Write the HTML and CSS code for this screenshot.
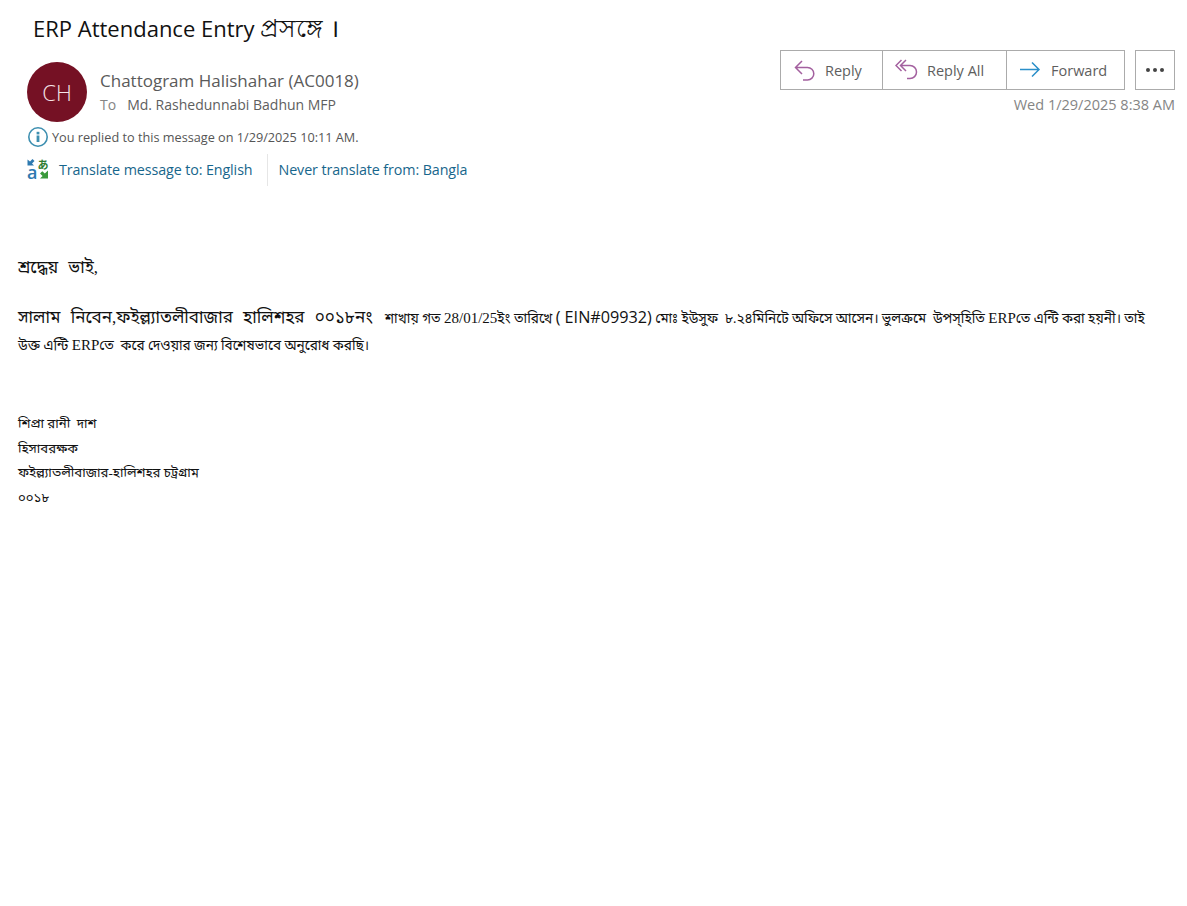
FILE: index.html
```html
<!DOCTYPE html>
<html lang="en">
<head>
<meta charset="utf-8">
<title>ERP Attendance Entry</title>
<link rel="stylesheet" href="styles.css">
</head>
<body>
<header class="mail-header">
  <h1 class="subject">ERP Attendance Entry <span class="subject-bn" lang="bn">প্রসঙ্গে ।</span></h1>
  <div class="meta">
    <div class="avatar">CH</div>
    <div class="people">
      <div class="sender">Chattogram Halishahar (AC0018)</div>
      <div class="recipient"><span class="to">To</span>Md. Rashedunnabi Badhun MFP</div>
    </div>
    <div class="actions">
      <div class="buttons">
        <div class="btn-group">
          <button class="btn btn-reply">
            <svg class="ic" width="24" height="24" viewBox="0 0 24 24"><path d="M9 3 2.500 9.500 9 16M3 9.500h11.500a6.300 6.300 0 0 1 6.300 6.200 6.300 6.300 0 0 1-6.300 6.300H10" class="purple"/></svg>
            Reply</button>
          <button class="btn btn-all">
            <svg class="ic" width="24" height="24" viewBox="0 0 24 24"><path d="M6.500 2 1 7.500 6.500 13M11 2 5.500 7.500 11 13M6 7.500h9a6.500 6.500 0 0 1 6.500 6.500 6.500 6.500 0 0 1-6.500 6.500h-3" class="purple"/></svg>
            Reply All</button>
          <button class="btn btn-fwd">
            <svg class="ic" width="24" height="24" viewBox="0 0 24 24"><path d="M1 11.500h18M13 4.500l7 7-7 7" class="blue"/></svg>
            Forward</button>
        </div>
        <button class="btn-more" aria-label="More"><i></i><i></i><i></i></button>
      </div>
      <div class="date">Wed 1/29/2025 8:38 AM</div>
    </div>
  </div>
  <div class="replied">
    <svg width="22" height="22" viewBox="0 0 22 22"><circle cx="11" cy="11" r="9.200" class="info-ring"/><rect x="9.600" y="9.500" width="2.800" height="6.500" class="info-fill"/><rect x="9.600" y="5.800" width="2.800" height="2.600" class="info-fill"/></svg>
    <span>You replied to this message on 1/29/2025 10:11 AM.</span>
  </div>
  <div class="translate">
    <svg class="tr-icon" width="22" height="22" viewBox="0 0 22 22">
      <path class="tr-blue" d="M0.500 1.500 3 3.500 5.500 1 7.500 3 5 5.500 7 7.500H0.500z"/>
      <text class="tr-a" x="0" y="20.500">a</text>
      <text class="tr-ja" x="10.500" y="10.500">あ</text>
      <path class="tr-green" d="M21 12.500v8h-8l2.600-2.600-2.600-2.400 2.300-2.300 2.500 2.400z"/>
    </svg>
    <a class="tr-link first">Translate message to: English</a>
    <a class="tr-link">Never translate from: Bangla</a>
  </div>
</header>
<main class="body" lang="bn">
  <p class="greet">শ্রদ্ধেয় ভাই,</p>
  <p class="para"><span class="lg">সালাম নিবেন,ফইল্ল্যাতলীবাজার হালিশহর ০০১৮নং</span>&nbsp;&nbsp; শাখায় গত <span class="lat">28/01/25</span>ইং তারিখে <span class="ein">( EIN#09932)</span> মোঃ ইউসুফ&nbsp; ৮.২৪মিনিটে অফিসে আসেন। ভুলক্রমে&nbsp; উপস্হিতি <span class="lat">ERP</span>তে এন্টি করা হয়নী। তাই<br>উক্ত এন্টি <span class="lat">ERP</span>তে&nbsp; করে দেওয়ার জন্য বিশেষভাবে অনুরোধ করছি।</p>
  <div class="sign">
    <div>শিপ্রা রানী&nbsp; দাশ</div>
    <div>হিসাবরক্ষক</div>
    <div>ফইল্ল্যাতলীবাজার-হালিশহর চট্রগ্রাম</div>
    <div>০০১৮</div>
  </div>
</main>
</body>
</html>
```
FILE: styles.css
```css
* { box-sizing: border-box; }
html, body { margin: 0; background: #fff; }
body { font-family: "Open Sans", "Noto Sans", "Liberation Sans", sans-serif; color: #000; height: 906px; overflow: hidden; }
.mail-header { padding: 11px 12px 0 27px; }
.subject { margin: 0 0 0 6px; font-size: 22px; font-weight: 400; line-height: 34px; color: #111; }
.subject-bn { font-size: 25px; line-height: 30px; }
.meta { display: flex; margin-top: 17px; height: 60px; }
.avatar { width: 60px; height: 60px; border-radius: 50%; background: #751124; color: #f5e5e8; font-size: 22px; font-weight: 300; display: flex; align-items: center; justify-content: center; flex: none; }
.people { margin-left: 13px; padding-top: 7px; flex: 1; }
.sender { font-size: 17px; line-height: 24px; color: #5a5a5a; }
.recipient { font-size: 14px; line-height: 22px; color: #5e5e5e; margin-top: 1px; }
.to { color: #858585; margin-right: 11px; }
.actions { margin-top: -12px; display: flex; flex-direction: column; align-items: flex-end; }
.buttons { display: flex; gap: 10px; }
.btn-group { display: flex; border: 1px solid #ababab; height: 40px; }
.btn { font: inherit; font-size: 14.500px; color: #5e5e5e; background: #fff; border: 0; padding: 0 0 0 12px; display: flex; align-items: center; gap: 8px; height: 38px; }
.btn-reply { width: 102px; border-right: 1px solid #ababab; }
.btn-all { width: 124px; border-right: 1px solid #ababab; }
.btn-fwd { width: 117px; }
.ic path { fill: none; stroke-width: 1.500; }
.purple { stroke: #a3609f; }
.blue { stroke: #2b8fc9; }
.btn-more { width: 40px; height: 40px; border: 1px solid #ababab; background: #fff; padding: 0; display: flex; align-items: center; justify-content: center; gap: 3px; }
.btn-more i { width: 4px; height: 4px; border-radius: 50%; background: #444; }
.date { font-size: 14.500px; line-height: 20px; color: #858585; margin-top: 5px; }
.replied { display: flex; align-items: center; gap: 3px; margin-top: 4px; font-size: 12.700px; line-height: 22px; color: #555; }
.info-ring { fill: none; stroke: #3d8fb0; stroke-width: 1.600; }
.info-fill { fill: #3d8fb0; }
.translate { display: flex; align-items: center; height: 32px; margin-top: 6px; }
.tr-icon { flex: none; margin-right: 10px; overflow: visible; margin-top: -2px; }
.tr-blue { fill: #2e7ab0; }
.tr-a { fill: #2e7ab0; font-family: "Open Sans", sans-serif; font-size: 18px; font-weight: 600; }
.tr-ja { fill: #2f7d33; font-family: "Noto Sans CJK JP", sans-serif; font-size: 11px; font-weight: 700; }
.tr-green { fill: #3a9a3c; }
.tr-link { font-size: 14.300px; line-height: 32px; color: #17668c; letter-spacing: -0.1px; }
.tr-link.first { padding-right: 14px; margin-right: 11px; border-right: 1px solid #e6e6e6; }
.body { padding: 69px 18px 0 18px; font-family: "Liberation Serif", "Noto Sans Bengali", "Noto Serif Bengali", "Lohit Bengali", serif; font-size: 13.600px; color: #111; }
.greet { margin: 0; font-size: 17px; line-height: 26px; word-spacing: 6px; }
.para { margin: 23px 0 0; line-height: 27px; }
.lg { font-size: 17px; word-spacing: 6px; margin-right: 2px; }
.lat { font-size: 15px; }
.ein { font-family: "Open Sans", sans-serif; font-size: 16.200px; }
.sign { margin-top: 53px; line-height: 24.700px; font-size: 13.200px; }
```
